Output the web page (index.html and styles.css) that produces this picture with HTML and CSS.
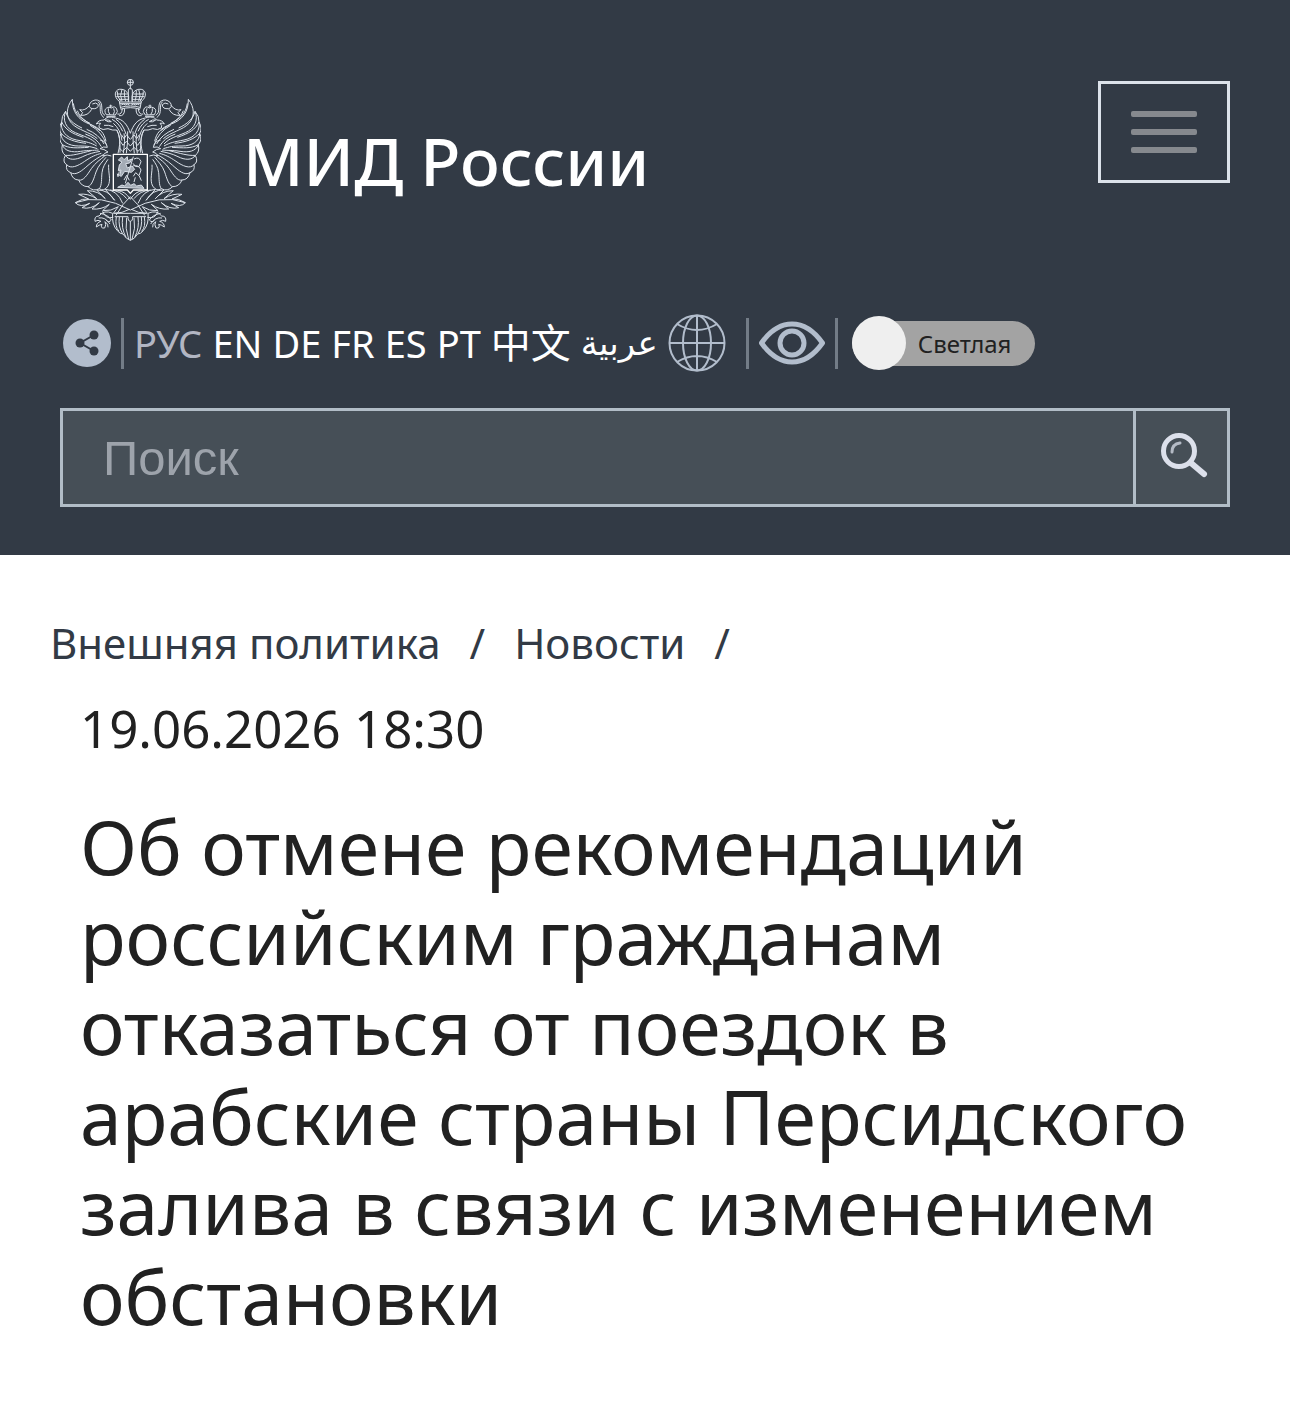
FILE: index.html
```html
<!DOCTYPE html>
<html lang="ru">
<head>
<meta charset="utf-8">
<meta name="viewport" content="width=device-width, initial-scale=1">
<title>МИД России</title>
<link rel="stylesheet" href="styles.css">
</head>
<body>
<header class="site-header">
  <div class="brand-row">
    <a class="brand" href="#">
      <svg class="emblem" viewBox="30 27 423 486" aria-hidden="true">
        <defs>
          <g id="half">
            <!-- wing: long outer feathers -->
            <path d="M67 88C66 125 85 150 118 162S163 190 168 214M67 88C48 112 47 140 65 160S120 186 142 206M70 100C74 132 94 147 120 160M82 122C92 150 120 160 150 182"/>
            <path d="M47 124C36 150 48 176 76 188S124 204 140 222M35 156C30 180 48 204 80 210S122 218 140 228M33 190C33 214 56 228 86 228S122 230 142 236M37 224C44 244 66 248 92 244S128 242 146 240M46 256C56 272 78 270 98 260S132 248 150 244M47 124C52 146 70 162 96 174M35 156C46 178 64 190 100 202M33 190C50 208 74 216 108 220M37 224C58 236 82 234 116 232M46 256C66 258 92 250 124 242"/>
            <path d="M50 284C62 298 84 288 104 274S138 254 154 250M62 308C78 318 96 302 114 286S146 262 160 254M86 330C100 334 112 314 124 296S152 268 164 258M114 350C126 346 132 324 138 306S158 274 168 262M148 356C156 346 154 326 156 308S166 280 174 268M174 348C184 330 174 306 176 284"/>
            <path d="M62 308Q46 302 50 284Q36 276 46 256Q32 246 37 224Q24 208 33 190Q24 176 35 156Q34 138 47 124M62 308Q68 330 86 330Q94 350 114 350Q130 366 148 356Q162 366 174 348"/>
            <path d="M110 178Q148 194 162 222M106 192Q140 204 154 230M120 166Q156 184 170 226M150 210Q168 212 172 232Q160 228 150 236Q162 236 174 246Q162 248 158 258Q172 252 184 258"/>
            <!-- head and neck -->
            <path d="M241 190C232 164 220 148 196 144C180 138 168 142 162 150Q144 150 139 162Q144 158 152 160Q144 166 148 174Q158 182 174 176Q188 182 200 180C208 194 214 210 204 250M165 150Q176 148 184 155Q174 158 165 150M162 166Q176 164 190 170M186 148Q206 158 218 184M198 148Q218 160 228 192M190 160Q212 178 216 212M200 180Q212 200 210 248M222 190Q226 210 220 250M233 184Q234 220 229 250M214 194l8 12l8-12l10 14M211 214l8 12l10-12l12 14M208 234l10 10l12-12l11 12"/>
            <!-- small crown and ribbon -->
            <path d="M169 134Q160 120 170 114Q177 109 184 114Q195 106 200 117Q206 124 196 135ZM169 139H197M182 114V104M178 108H187M175 115Q173 125 180 134M191 115Q196 125 190 134"/>
            <path d="M165 136C149 128 161 108 150 94Q135 84 121 98Q113 112 126 116Q145 118 145 104Q138 95 127 102M144 95C158 106 142 129 162 143M119 106Q105 124 89 119L98 128L92 136Q114 138 125 118M202 132Q216 136 217 115M207 137Q224 140 224 116"/>
            <!-- main crown -->
            <path d="M212 116L208 94C188 80 194 54 216 58Q232 60 236 79V94M216 58Q208 76 216 94M223 61Q222 80 227 94M202 64Q200 78 212 94M207 96H241M209 101H241M212 112Q226 108 241 108M212 118Q226 113 241 113M214 105l6-3l6 3l6-3l6 3M200 72h32M199 80h35M207 88h29"/>
            <!-- laurel branches -->
            <path d="M76 398Q150 370 241 420M76 398Q98 384 116 387L86 373Q114 369 140 386L112 362Q146 362 166 386L140 360Q174 358 194 391L166 358Q202 360 218 400M76 398Q90 414 119 400L96 413Q122 420 148 398L126 417Q154 420 178 403L158 422Q184 424 205 410L190 430Q218 430 238 418M180 360Q212 362 230 386M204 362Q226 364 241 388M241 380Q218 400 198 436"/>
            <!-- claws and tail -->
            <path d="M188 430Q162 418 147 438Q132 438 135 454Q144 448 153 454Q139 458 139 471Q148 464 156 463Q150 476 164 474Q170 464 165 455Q176 462 174 472M150 430Q174 434 184 450Q176 460 168 450M158 424Q166 448 190 442M146 444Q166 440 180 462"/>
            <path d="M188 430Q184 462 202 482Q210 492 219 492Q229 508 241 511M193 430H241M194 440H234Q234 454 241 454M199 441Q194 470 207 484M208 441Q204 470 218 491M218 441Q213 474 228 502M230 443Q224 474 236 508"/>
          </g>
        </defs>
        <g class="emblem-lines">
          <use href="#half"/>
          <use href="#half" transform="matrix(-1 0 0 1 482 0)"/>
          <circle cx="241" cy="37" r="9"/>
          <path d="M241 27V58M231 37H251M235 96V60Q241 48 247 60V96M241 454V511"/>
          <path class="shield" d="M190 253H292V360H250L241 370L232 360H190Z"/>
          <path class="rider" d="M205 270l10-9l7 8l10-9l1 12l13-5l-7 12l-12 2l5 13l14-6l8 10l-10 9l-20-3l-10 15l-5-2l4-17l-8 2l3-17l8-9z"/>
          <path d="M252 267q16-8 21 8l-6 15q-12 4-18-10M248 288q19-5 25 12l-6 17l-10-9l-7 11M208 304l-4 16l-2-9M222 330l8-14l8 15M250 260L226 340M268 318l6 14M256 322l-4 14"/>
          <path class="rider" d="M203 352l13-7l8 3l10-11l8 9l10-5l8 7l14-3l8 10z"/>
        </g>
      </svg>
      <span class="brand-name">МИД России</span>
    </a>
    <button class="menu-button" type="button" aria-label="Меню">
      <span class="menu-bar"></span><span class="menu-bar"></span><span class="menu-bar"></span>
    </button>
  </div>

  <div class="tools">
    <button class="icon-button" type="button" aria-label="Поделиться">
      <svg width="48" height="48" viewBox="0 0 48 48"><circle cx="24" cy="24" r="24" fill="#b2bdcc"/><path d="M31 16L17 24L31 32" fill="none" stroke="#323a45" stroke-width="2"/><g fill="#323a45"><circle cx="31" cy="16" r="4.500"/><circle cx="17" cy="24" r="4.500"/><circle cx="31" cy="32" r="4.500"/></g></svg>
    </button>
    <span class="divider"></span>
    <nav class="languages" aria-label="Язык">
      <a class="current" href="#">РУС</a>
      <a href="#">EN</a>
      <a href="#">DE</a>
      <a href="#">FR</a>
      <a href="#">ES</a>
      <a href="#">PT</a>
      <a class="chinese" href="#" lang="zh">中文</a>
      <a class="arabic" href="#" lang="ar">عربية</a>
      <a class="globe" href="#" aria-label="Другие языки">
        <svg width="58" height="58" viewBox="0 0 58 58" fill="none" stroke="#b2bdcc" stroke-width="2"><circle cx="29" cy="29" r="27.500"/><ellipse cx="29" cy="29" rx="14" ry="27.500"/><path d="M29 1V57M1 29H57M9 10Q29 22 49 10M9 48Q29 36 49 48"/></svg>
      </a>
    </nav>
    <span class="divider"></span>
    <button class="icon-button" type="button" aria-label="Версия для слабовидящих">
      <svg width="66" height="44" viewBox="0 0 66 44" fill="none" stroke="#b2bdcc"><path stroke-width="5" stroke-linejoin="round" d="M2.500 22C11 10 21 3 33 3S55 10 63.500 22C55 34 45 41 33 41S11 34 2.500 22Z"/><circle cx="33" cy="22" r="12" stroke-width="5"/></svg>
    </button>
    <span class="divider"></span>
    <label class="theme">
      <input class="theme-input" type="checkbox">
      <span class="theme-knob"></span>
      <span class="theme-label">Светлая</span>
    </label>
  </div>

  <form class="search">
    <input class="search-input" type="search" placeholder="Поиск" aria-label="Поиск">
    <button class="search-button" type="submit" aria-label="Найти">
      <svg width="52" height="52" viewBox="0 0 52 52" fill="none" stroke="#dce0eb" stroke-linecap="round"><circle cx="23" cy="19" r="15.500" stroke-width="5"/><path stroke-width="6" d="M35 31L48 42"/><path stroke-width="3" stroke="#b4bac5" d="M16 20Q16 12 24 11"/></svg>
    </button>
  </form>
</header>

<main>
  <nav class="breadcrumbs" aria-label="Навигация">
    <a href="#">Внешняя политика</a><span>/</span><a href="#">Новости</a><span>/</span>
  </nav>
  <article class="article">
    <time class="date" datetime="2026-06-19T18:30">19.06.2026 18:30</time>
    <h1 class="headline">Об отмене рекомендаций российским гражданам отказаться от поездок в арабские страны Персидского залива в связи с изменением обстановки</h1>
  </article>
</main>
</body>
</html>
```
FILE: styles.css
```css
* {
  box-sizing: border-box;
}

body {
  margin: 0;
  background: #fff;
  color: #212121;
  font-family: "Noto Sans", "Noto Sans CJK SC", "DejaVu Sans", sans-serif;
}

a {
  color: inherit;
  text-decoration: none;
}

button {
  margin: 0;
  padding: 0;
  border: 0;
  background: none;
  cursor: pointer;
}

svg {
  display: block;
}

.site-header {
  padding: 79px 60px 48px;
  background: #323a45;
  color: #fff;
}

.brand-row {
  display: flex;
  justify-content: space-between;
  align-items: flex-start;
}

.brand {
  display: flex;
  align-items: center;
  gap: 42px;
}

.emblem {
  width: 141px;
  height: 162px;
}

.emblem-lines {
  fill: none;
  stroke: #dce2ea;
  stroke-width: 3;
  stroke-linejoin: round;
}

.shield {
  fill: #323a45;
  stroke: #fff;
  stroke-width: 4;
}

.rider {
  fill: #a4acb6;
}

.brand-name {
  font-size: 66px;
  font-weight: 500;
  line-height: 80px;
}

.menu-button {
  display: flex;
  flex-direction: column;
  justify-content: center;
  align-items: center;
  gap: 12px;
  width: 132px;
  height: 102px;
  margin-top: 2px;
  border: 3px solid #dce2ea;
}

.menu-bar {
  width: 66px;
  height: 6px;
  border-radius: 2px;
  background: #86898e;
}

.tools {
  display: flex;
  align-items: center;
  gap: 10px;
  height: 60px;
  margin-top: 72px;
  padding-left: 3px;
}

.divider {
  width: 3px;
  height: 51px;
  background: #737c87;
}

.languages {
  display: flex;
  align-items: center;
  gap: 10px;
  padding-right: 10px;
  font-size: 38px;
  line-height: 60px;
}

.current {
  color: #b2b6c3;
}

.chinese {
  font-size: 40px;
}

.arabic {
  font-family: "DejaVu Sans", sans-serif;
  font-size: 34px;
}

.theme {
  display: flex;
  align-items: center;
  gap: 12px;
  height: 45px;
  margin-left: 4px;
  padding-right: 24px;
  border-radius: 23px;
  background: #a3a3a3;
  color: #212121;
}

.theme-input {
  appearance: none;
  position: absolute;
  margin: 0;
}

.theme-knob {
  width: 54px;
  height: 54px;
  border-radius: 50%;
  background: #efefef;
}

.theme-label {
  font-size: 24px;
}

.search {
  display: flex;
  height: 99px;
  margin-top: 35px;
  border: 3px solid #b2bdc7;
  background: #464f57;
}

.search-input {
  flex: 1;
  min-width: 0;
  padding: 0 40px;
  border: 0;
  background: none;
  color: #fff;
  font: 49px "Liberation Sans", sans-serif;
}

.search-input::placeholder {
  color: #9da3ab;
}

.search-button {
  display: flex;
  justify-content: center;
  align-items: center;
  width: 94px;
  border-left: 3px solid #b2bdc7;
}

.breadcrumbs {
  display: flex;
  gap: 29px;
  padding: 58px 50px 0;
  color: #323a45;
  font-size: 42px;
  line-height: 60px;
}

.article {
  padding: 20px 80px 72px;
}

.date {
  display: block;
  font-size: 51px;
  line-height: 70px;
}

.headline {
  margin: 38px 0 0;
  font-size: 75px;
  font-weight: 400;
  line-height: 90px;
}
```
